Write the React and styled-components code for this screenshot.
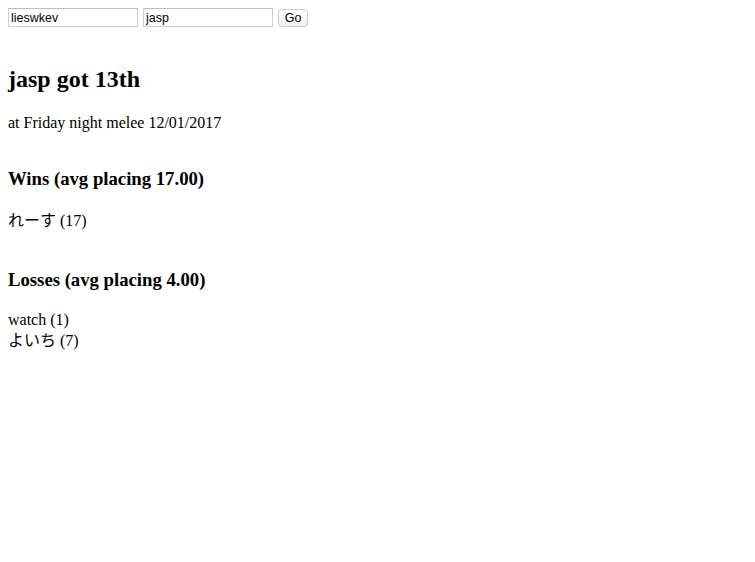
import React from 'react'
import styled, { createGlobalStyle } from 'styled-components'

const GlobalStyle = createGlobalStyle`
  body {
    margin: 0;
    background: #fff;
    color: #000;
    font-family: "Liberation Serif", "Noto Sans CJK JP", serif;
  }
`

const Page = styled.div`
  padding: 8px;
`

const SearchForm = styled.form`
  display: flex;
  align-items: center;
  gap: 5px;
  height: 19px;
  margin: 0;
`

const TextInput = styled.input`
  box-sizing: border-box;
  width: 130px;
  height: 19px;
  padding: 0 2px;
  border: 1px solid #cfcfcf;
  border-top-color: #bdbdbd;
  font-family: "Liberation Sans", Arial, sans-serif;
  font-size: 12.5px;
  color: #000;
  outline: none;
`

const GoButton = styled.button`
  box-sizing: border-box;
  width: 30px;
  height: 18px;
  padding: 0;
  border: 1px solid #cbcbcb;
  border-radius: 4px;
  background: linear-gradient(#ffffff, #f3f3f3);
  font-family: "Liberation Sans", Arial, sans-serif;
  font-size: 12.5px;
  color: #000;
`

const Title = styled.h2`
  margin: 38px 0 0;
  font-size: 24px;
  line-height: 28px;
  font-weight: bold;
`

const Subtitle = styled.p`
  margin: 21px 0 0;
  font-size: 16px;
  line-height: 18px;
`

const SectionTitle = styled.h3`
  margin: ${(p) => p.$gap}px 0 0;
  font-size: 18.72px;
  line-height: 22px;
  font-weight: bold;
`

const List = styled.div`
  margin-top: ${(p) => p.$gap}px;
`

const Item = styled.div`
  font-size: 16px;
  line-height: 21px;
  height: 21px;
`

const wins = [{ name: 'れーす', placing: 17 }]
const losses = [
  { name: 'watch', placing: 1 },
  { name: 'よいち', placing: 7 }
]

const avg = (list) => (list.reduce((s, m) => s + m.placing, 0) / list.length).toFixed(2)

const App = () => {
  return (
    <>
      <GlobalStyle />
      <Page>
        <SearchForm onSubmit={(e) => e.preventDefault()}>
          <TextInput type="text" defaultValue="lieswkev" />
          <TextInput type="text" defaultValue="jasp" />
          <GoButton type="submit">Go</GoButton>
        </SearchForm>

        <Title>jasp got 13th</Title>
        <Subtitle>at Friday night melee 12/01/2017</Subtitle>

        <SectionTitle $gap={36}>Wins (avg placing {avg(wins)})</SectionTitle>
        <List $gap={20}>
          {wins.map((m) => (
            <Item key={m.name}>
              {m.name} ({m.placing})
            </Item>
          ))}
        </List>

        <SectionTitle $gap={38}>Losses (avg placing {avg(losses)})</SectionTitle>
        <List $gap={18}>
          {losses.map((m) => (
            <Item key={m.name}>
              {m.name} ({m.placing})
            </Item>
          ))}
        </List>
      </Page>
    </>
  )
}

export default App
